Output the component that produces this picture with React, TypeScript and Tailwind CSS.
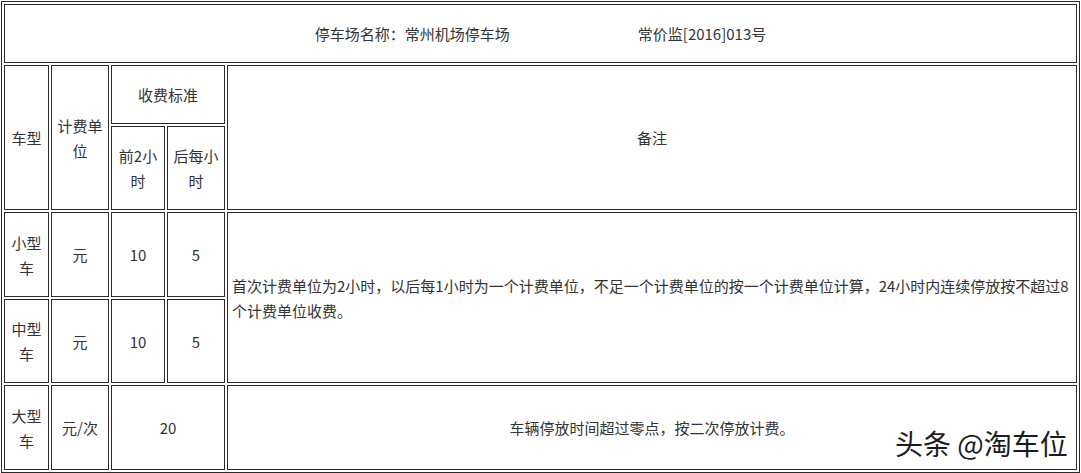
import React from 'react';

const cell = 'border border-[#2a2a2a] p-0 text-center align-middle whitespace-nowrap';

export default function App() {
    return (
        <div
            className="relative w-[1081px] h-[473px] bg-white text-[#333] text-[15px] leading-[25px]"
            style={{ fontFamily: '"Noto Sans CJK SC", "Noto Sans", sans-serif' }}
        >
            <table className="ml-[1px] mt-[1px] w-[1079px] table-fixed border-separate border-spacing-[2px] border border-[#2a2a2a]">
                <colgroup>
                    <col className="w-[45px]" />
                    <col className="w-[58px]" />
                    <col className="w-[54px]" />
                    <col className="w-[58px]" />
                    <col className="w-[850px]" />
                </colgroup>
                <tbody>
                    <tr className="h-[59px]">
                        <td colSpan={5} className={cell}>
                            <span>停车场名称：常州机场停车场</span>
                            <span className="ml-[128px]">常价监[2016]013号</span>
                        </td>
                    </tr>
                    <tr className="h-[59px]">
                        <td rowSpan={2} className={cell}>车型</td>
                        <td rowSpan={2} className={cell}>计费单<br />位</td>
                        <td colSpan={2} className={cell}>收费标准</td>
                        <td rowSpan={2} className={cell}>备注</td>
                    </tr>
                    <tr className="h-[84px]">
                        <td className={cell}>前2小<br />时</td>
                        <td className={cell}>后每小<br />时</td>
                    </tr>
                    <tr className="h-[85px]">
                        <td className={cell}>小型<br />车</td>
                        <td className={cell}>元</td>
                        <td className={cell}>10</td>
                        <td className={cell}>5</td>
                        <td rowSpan={2} className="border border-[#2a2a2a] p-0 pl-[4px] text-left align-middle whitespace-nowrap">
                            首次计费单位为2小时，以后每1小时为一个计费单位，不足一个计费单位的按一个计费单位计算，24小时内连续停放按不超过8
                            <br />
                            个计费单位收费。
                        </td>
                    </tr>
                    <tr className="h-[84px]">
                        <td className={cell}>中型<br />车</td>
                        <td className={cell}>元</td>
                        <td className={cell}>10</td>
                        <td className={cell}>5</td>
                    </tr>
                    <tr className="h-[85px]">
                        <td className={cell}>大型<br />车</td>
                        <td className={cell}>元/次</td>
                        <td colSpan={2} className={cell}>20</td>
                        <td className={cell}>车辆停放时间超过零点，按二次停放计费。</td>
                    </tr>
                </tbody>
            </table>

            {/* watermark */}
            <div
                className="absolute left-[895px] top-[424px] text-[28px] leading-[36px] text-[#1c1c1c] whitespace-nowrap"
                style={{ textShadow: '1px 1px 0 #fff, -1px -1px 0 #fff, 1px -1px 0 #fff, -1px 1px 0 #fff' }}
            >
                头条 @淘车位
            </div>
        </div>
    );
}
